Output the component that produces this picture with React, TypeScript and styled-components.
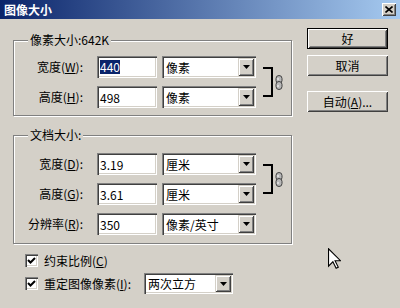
import { Fragment } from "react";
import styled, { createGlobalStyle } from "styled-components";

const GlobalStyle = createGlobalStyle`
  html, body {
    margin: 0;
    padding: 0;
    background: #d4d0c8;
  }
  body {
    font-family: "Noto Sans CJK SC", "Liberation Sans", sans-serif;
    font-size: 12px;
    color: #000;
  }
`;

const sunken = `
  box-shadow: inset 1px 1px 0 #808080, inset 2px 2px 0 #404040,
    inset -1px -1px 0 #fff, inset -2px -2px 0 #d4d0c8;
`;

const raised = `
  box-shadow: inset 1px 1px 0 #fff, inset -1px -1px 0 #404040,
    inset 2px 2px 0 #d4d0c8, inset -2px -2px 0 #808080;
`;

const Window = styled.div`
  position: relative;
  width: 400px;
  height: 308px;
  overflow: hidden;
  background: #d4d0c8;
  display: flex;
  flex-direction: column;
`;

const TitleBar = styled.div`
  height: 19px;
  flex: none;
  display: flex;
  align-items: center;
  justify-content: space-between;
  padding: 0 4px 0 4px;
  background: linear-gradient(to right, #0a246a, #a6caf0);
  color: #fff;
  font-weight: bold;
  font-size: 12px;
  line-height: 14px;
`;

const CloseButton = styled.div`
  width: 14px;
  height: 13px;
  background: #d4d0c8;
  display: flex;
  align-items: center;
  justify-content: center;
  ${raised}
`;

const Body = styled.div`
  display: flex;
  padding: 9px 0 0 13px;
`;

const LeftColumn = styled.div`
  width: 280px;
  padding-top: 5px;
  display: flex;
  flex-direction: column;
`;

const Group = styled.fieldset<{ $top?: number; $pt: number; $pb: number }>`
  margin: ${(p) => p.$top ?? 0}px 0 0 0;
  padding: ${(p) => p.$pt}px 0 ${(p) => p.$pb}px 0;
  width: 279px;
  box-sizing: border-box;
  min-inline-size: 0;
  border: 1px solid #808080;
  box-shadow: inset 1px 1px 0 #fff, 1px 1px 0 #fff;
`;

const Legend = styled.legend`
  margin-left: 14px;
  padding: 0 2px;
  line-height: 14px;
  background: #d4d0c8;
`;

const Rows = styled.div`
  display: grid;
  grid-template-columns: 83px 65px 101px 1fr;
  row-gap: 8px;
  align-items: center;
`;

const Label = styled.span`
  text-align: right;
  padding-right: 14px;
  line-height: 14px;
  white-space: nowrap;
`;

const Field = styled.div`
  box-sizing: border-box;
  width: 60px;
  height: 22px;
  background: #fff;
  padding: 0 3px;
  display: flex;
  align-items: center;
  ${sunken}
`;

const Selected = styled.span`
  background: #0a246a;
  color: #fff;
  line-height: 14px;
`;

const Select = styled.div<{ $w: number; $h: number }>`
  box-sizing: border-box;
  width: ${(p) => p.$w}px;
  height: ${(p) => p.$h}px;
  background: #fff;
  padding: 2px 2px 2px 4px;
  display: flex;
  align-items: center;
  justify-content: space-between;
  white-space: nowrap;
  ${sunken}
`;

const ArrowButton = styled.span`
  width: 16px;
  align-self: stretch;
  background: #d4d0c8;
  display: flex;
  align-items: center;
  justify-content: center;
  box-shadow: inset 1px 1px 0 #d4d0c8, inset -1px -1px 0 #404040,
    inset 2px 2px 0 #fff, inset -2px -2px 0 #808080;
`;

const LinkCell = styled.div`
  grid-column: 4;
  grid-row: 1 / span 2;
  display: flex;
  align-items: center;
  gap: 2px;
`;

const Bracket = styled.div`
  width: 10px;
  height: 30px;
  box-sizing: border-box;
  border: 2px solid #000;
  border-left: none;
`;

const CheckRow = styled.div<{ $top: number; $h: number }>`
  display: flex;
  align-items: center;
  margin-top: ${(p) => p.$top}px;
  height: ${(p) => p.$h}px;
  padding-left: 12px;
  white-space: nowrap;
`;

const CheckBox = styled.span`
  width: 13px;
  height: 13px;
  box-sizing: border-box;
  background: #fff;
  display: flex;
  align-items: center;
  justify-content: center;
  margin-right: 6px;
  ${sunken}
`;

const CheckText = styled.span`
  line-height: 14px;
  width: 100px;
`;

const ButtonColumn = styled.div`
  display: flex;
  flex-direction: column;
  margin-left: 14px;
`;

const Button = styled.div<{ $default?: boolean; $top: number }>`
  box-sizing: border-box;
  width: 81px;
  height: 21px;
  margin-top: ${(p) => p.$top}px;
  display: flex;
  align-items: center;
  justify-content: center;
  line-height: 14px;
  background: #d4d0c8;
  border: ${(p) => (p.$default ? "1px solid #000" : "none")};
  ${raised}
`;

const Cursor = styled.svg`
  position: absolute;
  left: 328px;
  top: 248px;
`;

const Arrow = () => (
  <ArrowButton>
    <svg width="7" height="4" viewBox="0 0 7 4">
      <path d="M0 0h7L3.5 4z" fill="#000" />
    </svg>
  </ArrowButton>
);

const ChainIcon = () => (
  <svg width="8" height="15" viewBox="0 0 8 15">
    <rect x="1" y="0.5" width="6" height="8" rx="3" fill="#b8b8b8" stroke="#404040" />
    <rect x="1" y="6.5" width="6" height="8" rx="3" fill="#b8b8b8" stroke="#404040" />
    <path d="M3 3v2M3 10v2" stroke="#fff" />
  </svg>
);

const Check = () => (
  <svg width="9" height="9" viewBox="0 0 9 9">
    <path d="M1 4l2.5 2.5L8 2" fill="none" stroke="#000" strokeWidth="2" />
  </svg>
);

interface IRow {
  label: string;
  key: string;
  value: string;
  unit: string;
  selected?: boolean;
}

const pixelRows: IRow[] = [
  { label: "宽度", key: "W", value: "440", unit: "像素", selected: true },
  { label: "高度", key: "H", value: "498", unit: "像素" },
];

const docRows: IRow[] = [
  { label: "宽度", key: "D", value: "3.19", unit: "厘米" },
  { label: "高度", key: "G", value: "3.61", unit: "厘米" },
  { label: "分辨率", key: "R", value: "350", unit: "像素/英寸" },
];

function SizeRows({ rows }: { rows: IRow[] }) {
  return (
    <Rows>
      {rows.map((row) => (
        <Fragment key={row.key}>
          <Label>
            {row.label}(<u>{row.key}</u>):
          </Label>
          <Field>
            {row.selected ? <Selected>{row.value}</Selected> : row.value}
          </Field>
          <Select $w={94} $h={22}>
            {row.unit}
            <Arrow />
          </Select>
        </Fragment>
      ))}
      <LinkCell>
        <Bracket />
        <ChainIcon />
      </LinkCell>
    </Rows>
  );
}

export default function App() {
  return (
    <Window>
      <GlobalStyle />
      <TitleBar>
        图像大小
        <CloseButton>
          <svg width="8" height="7" viewBox="0 0 8 7">
            <path d="M0.5 0.5l7 6M7.5 0.5l-7 6" stroke="#000" strokeWidth="1.6" />
          </svg>
        </CloseButton>
      </TitleBar>
      <Body>
        <LeftColumn>
          <Group $pt={9} $pb={7}>
            <Legend>像素大小:642K</Legend>
            <SizeRows rows={pixelRows} />
          </Group>
          <Group $top={12} $pt={11} $pb={8}>
            <Legend>文档大小:</Legend>
            <SizeRows rows={docRows} />
          </Group>
          <CheckRow $top={9} $h={15}>
            <CheckBox>
              <Check />
            </CheckBox>
            <CheckText>
              约束比例(<u>C</u>)
            </CheckText>
          </CheckRow>
          <CheckRow $top={5} $h={21}>
            <CheckBox>
              <Check />
            </CheckBox>
            <CheckText>
              重定图像像素(<u>I</u>):
            </CheckText>
            <Select $w={89} $h={21}>
              两次立方
              <Arrow />
            </Select>
          </CheckRow>
        </LeftColumn>
        <ButtonColumn>
          <Button $default $top={0}>
            好
          </Button>
          <Button $top={6}>取消</Button>
          <Button $top={15}>
            自动(<u>A</u>)...
          </Button>
        </ButtonColumn>
      </Body>
      <Cursor width="13" height="21" viewBox="0 0 12 19">
        <path
          d="M0.5 0.5V16.5L4.5 12.5L7.5 18.5L9.5 17.5L6.5 11.5H11.5Z"
          fill="#fff"
          stroke="#000"
        />
      </Cursor>
    </Window>
  );
}
